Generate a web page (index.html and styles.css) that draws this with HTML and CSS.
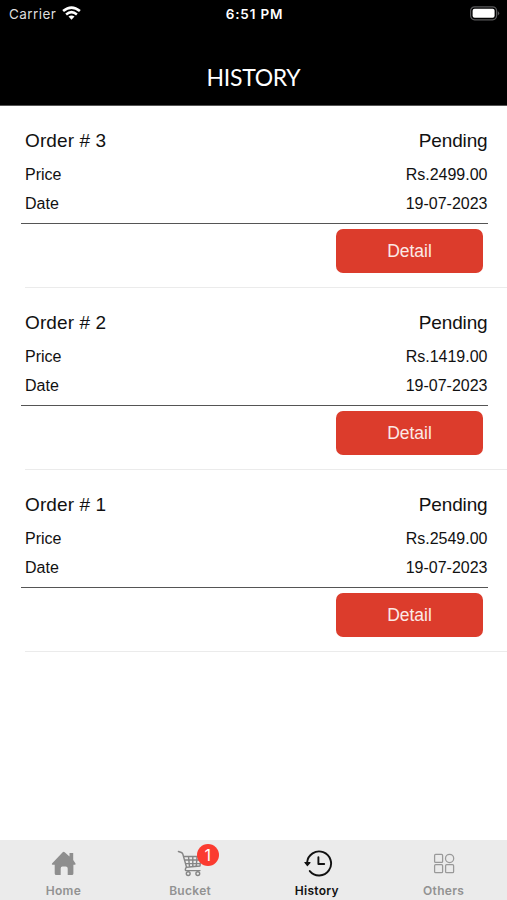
FILE: index.html
```html
<!DOCTYPE html>
<html lang="en">
<head>
<meta charset="utf-8">
<title>History</title>
<link rel="stylesheet" href="styles.css">
</head>
<body>
<div class="app">
  <header class="header">
    <div class="status">
      <div class="carrier"><span>Carrier</span>
        <svg width="19" height="15" viewBox="0 0 19 15" fill="none" stroke="#fff" stroke-width="2.6"><path d="M1.1 5.1Q9.5-2 17.9 5.1M4.1 8.4Q9.5 4 14.9 8.4"/><path d="M6.5 10.6Q9.5 8.2 12.5 10.6L9.5 13.8Z" fill="#fff" stroke="none"/></svg>
      </div>
      <div class="clock">6:51 PM</div>
      <div class="battery">
        <svg width="31" height="15" viewBox="0 0 31 15"><rect x="1.6" y=".8" width="26" height="13" rx="4" fill="none" stroke="#59595b" stroke-width="1.2"/><rect x="3.6" y="2.8" width="22" height="9" rx="2" fill="#fff"/><path d="M28.8 5Q31.6 7.3 28.8 9.6Z" fill="#59595b"/></svg>
      </div>
    </div>
    <h1 class="title">HISTORY</h1>
  </header>
  <main class="orders">
    <section class="order">
      <div class="info">
        <div class="row head"><span>Order # 3</span><span>Pending</span></div>
        <div class="row"><span>Price</span><span>Rs.2499.00</span></div>
        <div class="row"><span>Date</span><span>19-07-2023</span></div>
      </div>
      <button class="detail">Detail</button>
    </section>
    <section class="order">
      <div class="info">
        <div class="row head"><span>Order # 2</span><span>Pending</span></div>
        <div class="row"><span>Price</span><span>Rs.1419.00</span></div>
        <div class="row"><span>Date</span><span>19-07-2023</span></div>
      </div>
      <button class="detail">Detail</button>
    </section>
    <section class="order">
      <div class="info">
        <div class="row head"><span>Order # 1</span><span>Pending</span></div>
        <div class="row"><span>Price</span><span>Rs.2549.00</span></div>
        <div class="row"><span>Date</span><span>19-07-2023</span></div>
      </div>
      <button class="detail">Detail</button>
    </section>
  </main>
  <nav class="tabs">
    <a class="tab">
      <svg width="32" height="32" viewBox="0 0 32 32" fill="#8e8e8e"><path d="M5 16.5 15.7 5.2Q16.7 4.3 17.7 5.2L22.5 9.5V6H26.2V13L28.5 16.5Q29 17.8 27.7 17.8H26.4V26.5Q26.4 28 24.9 28H20.7V21.5Q20.7 19.6 18.7 19.6H15.4Q13.7 19.6 13.7 21.5V28H9.4Q7.7 28 7.7 26.5V17.8H5.7Q4.4 17.8 5 16.5Z"/></svg>
      <span>Home</span>
    </a>
    <a class="tab">
      <svg width="32" height="32" viewBox="0 0 32 32" fill="none" stroke="#858585" stroke-width="1.4" stroke-linecap="round" stroke-linejoin="round"><path d="M4.4 4.5 7.4 5.5Q8.4 5.9 8.8 7L12.4 19.8 11.4 22.1Q11 23.6 12.5 23.6H26M9.6 9.5H27L26 19 12.4 20.2M10.7 13H26.5M11.5 16.6H26M14.5 9.5 15.5 20M18.8 9.5V19.6M23 9.5 22.3 19.2"/><circle cx="14.2" cy="26.6" r="1.9"/><circle cx="23.8" cy="26.6" r="1.9"/></svg>
      <span>Bucket</span>
      <b class="badge">1</b>
    </a>
    <a class="tab active">
      <svg width="32" height="32" viewBox="0 0 32 32" fill="none" stroke="#111" stroke-width="1.9" stroke-linecap="round" stroke-linejoin="round"><path d="M6.1 15.5A12 12 0 1 1 8.8 24.1M17.4 10.2V17H23.2"/><path d="M3.9 15.5H9L6.3 18.5Z" fill="#111" stroke-width="1.2"/></svg>
      <span>History</span>
    </a>
    <a class="tab">
      <svg width="32" height="32" viewBox="0 0 32 32" fill="none" stroke="#999" stroke-width="1.25"><rect x="6.6" y="7.4" width="8" height="8" rx="1"/><circle cx="21.6" cy="11.4" r="4.1"/><rect x="6.6" y="17.7" width="8" height="8" rx="1"/><rect x="17.6" y="17.7" width="8" height="8" rx="1"/></svg>
      <span>Others</span>
    </a>
  </nav>
</div>
</body>
</html>
```

FILE: styles.css
```css
* { box-sizing: border-box; }
body { margin: 0; background: #fff; font-family: "Liberation Sans", Arial, sans-serif; color: #111; }
.app { width: 507px; height: 900px; display: flex; flex-direction: column; overflow: hidden; }
.header { height: 106px; flex: none; background: #000; color: #fff; border-bottom: 1px solid #555; }
.status { display: grid; grid-template-columns: 1fr auto 1fr; align-items: center; height: 28px; padding: 0 7px 0 9px; font-family: Inter, sans-serif; font-size: 13.5px; }
.carrier { display: flex; align-items: center; gap: 6px; color: #ddd; letter-spacing: .42px; }
.carrier svg { margin-top: -2px; }
.clock { font-size: 13.5px; font-weight: 600; letter-spacing: .85px; }
.battery { display: flex; justify-content: flex-end; margin-top: -1px; }
.title { margin: 36px 0 0; font: 400 23px/26px Lato, sans-serif; letter-spacing: -.3px; text-align: center; }
.orders { flex: 1; }
.order { height: 182px; display: flex; flex-direction: column; padding: 20px 19.5px 0 21px; background: linear-gradient(#ebebeb, #ebebeb) 25px 181px / 482px 1px no-repeat; }
.info { height: 98px; padding-left: 4px; border-bottom: 1px solid #555; }
.row { display: flex; justify-content: space-between; height: 29px; font-size: 16px; line-height: 29px; }
.row.head { height: 34px; font-size: 19px; line-height: 30px; letter-spacing: .1px; }
.row.head span:last-child { letter-spacing: -.15px; }
.detail { align-self: flex-end; width: 147px; height: 44px; margin: 5px 4.5px 0 0; padding: 0; border: 0; border-radius: 7px; background: #dc3c2c; color: #fbe9e6; font: 17.5px/45px "Liberation Sans", Arial, sans-serif; }
.tabs { height: 60px; flex: none; display: grid; grid-template-columns: repeat(4, 1fr); background: #ebebeb; }
.tab { position: relative; display: flex; flex-direction: column; align-items: center; padding-top: 7px; color: #929292; font: 600 12px/16px Inter, sans-serif; letter-spacing: .3px; }
.tab span { margin-top: 4px; }
.active { color: #111; }
.badge { position: absolute; left: 70px; top: 4px; width: 22px; height: 22px; border-radius: 50%; background: #fb3b30; color: #fff; font: 400 16px/22px Inter, sans-serif; letter-spacing: 0; text-align: center; }
```
